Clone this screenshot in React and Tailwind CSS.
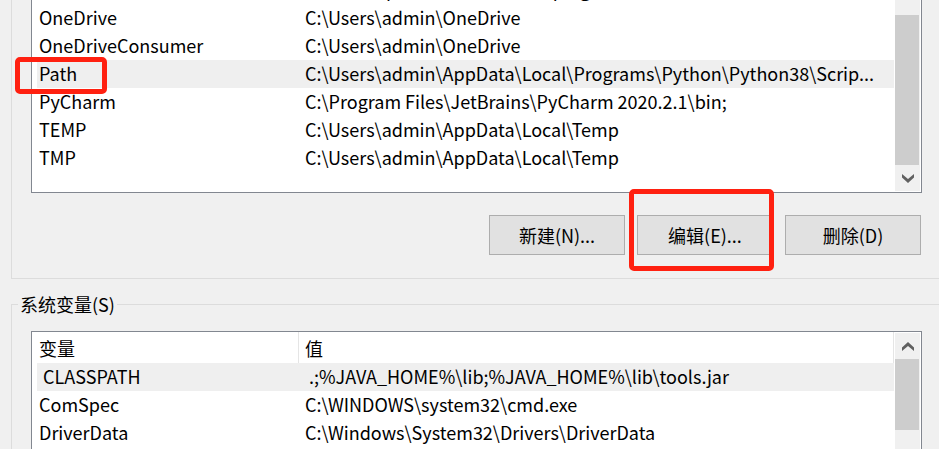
import React from 'react';
import clsx from 'clsx';

const userVars = [
  { name: 'MOZ_PLUGIN_PATH', value: 'D:\\develop\\Foxit PDF Reader\\plugins\\' },
  { name: 'OneDrive', value: 'C:\\Users\\admin\\OneDrive' },
  { name: 'OneDriveConsumer', value: 'C:\\Users\\admin\\OneDrive' },
  { name: 'Path', value: 'C:\\Users\\admin\\AppData\\Local\\Programs\\Python\\Python38\\Scrip...', selected: true },
  { name: 'PyCharm', value: 'C:\\Program Files\\JetBrains\\PyCharm 2020.2.1\\bin;' },
  { name: 'TEMP', value: 'C:\\Users\\admin\\AppData\\Local\\Temp' },
  { name: 'TMP', value: 'C:\\Users\\admin\\AppData\\Local\\Temp' },
];

const systemVars = [
  { name: ' CLASSPATH', value: ' .;%JAVA_HOME%\\lib;%JAVA_HOME%\\lib\\tools.jar', selected: true },
  { name: 'ComSpec', value: 'C:\\WINDOWS\\system32\\cmd.exe' },
  { name: 'DriverData', value: 'C:\\Windows\\System32\\Drivers\\DriverData' },
];

function VarTable({ rows, label, header }) {
  return (
    <table aria-label={label} className="w-full table-fixed border-separate border-spacing-0 text-left leading-[26px]">
      <colgroup>
        <col className="w-[262px]" />
        <col />
      </colgroup>
      {header && (
        <thead>
          <tr className="h-[31px]">
            <th className="border-r border-[#e5e5e5] p-0 pl-0.5 font-normal">变量</th>
            <th className="border-r border-[#e5e5e5] p-0 pl-1.5 font-normal">值</th>
          </tr>
        </thead>
      )}
      <tbody>
        {rows.map((row) => (
          <tr key={row.name} className={clsx('h-7', row.selected && 'bg-[#efefef]')}>
            <td className="overflow-hidden p-0 pl-0.5 align-top whitespace-pre">{row.name}</td>
            <td className="overflow-hidden p-0 pl-1.5 align-top whitespace-pre">{row.value}</td>
          </tr>
        ))}
      </tbody>
    </table>
  );
}

function ArrowButton({ up }) {
  return (
    <button
      type="button"
      aria-label={up ? '向上滚动' : '向下滚动'}
      className="flex h-[26px] w-full shrink-0 items-center justify-center"
    >
      <svg width="12" height="9" viewBox="0 0 12 9" fill="#606060">
        {up ? (
          <path d="M6 0 12 5.5V9L6 4 0 9V5.5Z" />
        ) : (
          <path d="M6 9 0 3.5V0L6 5 12 0V3.5Z" />
        )}
      </svg>
    </button>
  );
}

function PushButton({ children }) {
  return (
    <button type="button" className="h-10 w-[136px] border border-[#adadad] bg-[#e1e1e1] pb-px leading-[26px]">
      {children}
    </button>
  );
}

export default function App() {
  return (
    <main className="flex h-screen flex-col overflow-hidden bg-[#f0f0f0] pl-[11px] font-['Noto_Sans_CJK_SC',sans-serif] text-[18px] text-black">
      <section aria-label="用户变量" className="border-b border-l border-[#dcdcdc] pr-[17px] pb-[23px] pl-[19px]">
        <div className="relative flex h-[193px] border-x border-b border-[#828790] bg-white pr-px pb-px pl-[5px]">
          <div className="mr-px flex min-w-0 flex-1 flex-col justify-end overflow-hidden pb-[19px]">
            <VarTable rows={userVars} label="用户变量" />
          </div>
          <div className="flex w-[25px] flex-col bg-[#f0f0f0] pt-[15px]">
            <div className="mr-px flex-1 bg-[#cdcdcd]" />
            <ArrowButton />
          </div>
          <div className="pointer-events-none absolute top-[57px] -left-[17px] h-[37px] w-[92px] rounded-[5px] border-5 border-[#ff2010]" />
        </div>

        <div className="mt-[22px] flex justify-end gap-3 pr-px">
          <PushButton>新建(N)...</PushButton>
          <div className="relative">
            <PushButton>编辑(E)...</PushButton>
            <div className="pointer-events-none absolute -top-[26px] -left-2 h-[82px] w-[145px] rounded-[5px] border-5 border-[#ff2010]" />
          </div>
          <PushButton>删除(D)</PushButton>
        </div>
      </section>

      <fieldset className="mt-3 flex min-h-0 min-w-0 flex-1 flex-col border-t border-l border-[#dcdcdc]">
        <legend className="ml-1.5 px-0.5 leading-[26px]">系统变量(S)</legend>
        <div className="mt-3.5 mr-[17px] ml-[19px] flex min-h-0 flex-1 border-x border-t border-[#828790] bg-white pr-px pl-[5px]">
          <div className="mr-px min-w-0 flex-1 overflow-hidden">
            <VarTable rows={systemVars} label="系统变量" header />
          </div>
          <div className="mt-px flex w-[25px] flex-col bg-[#f0f0f0]">
            <ArrowButton up />
            <div className="mr-px h-[71px] bg-[#cdcdcd]" />
          </div>
        </div>
      </fieldset>
    </main>
  );
}
